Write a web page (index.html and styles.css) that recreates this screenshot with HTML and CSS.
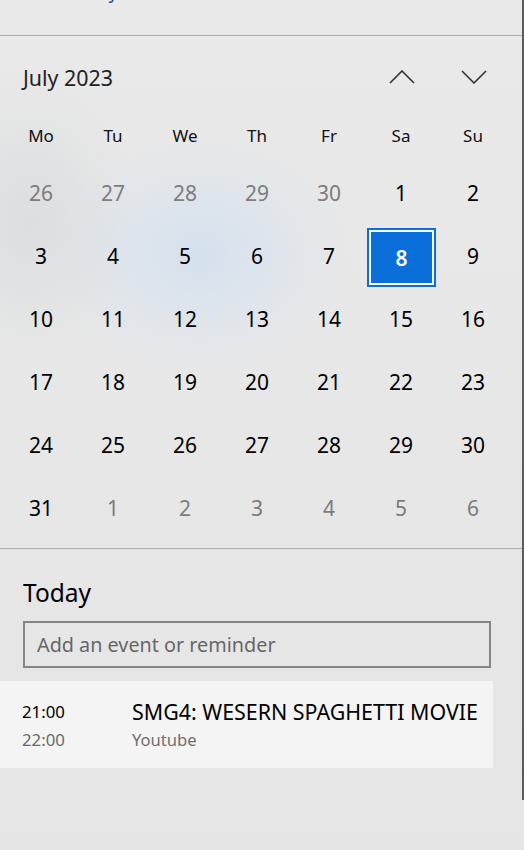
FILE: index.html
```html
<!DOCTYPE html>
<html lang="en">
<head>
    <meta charset="UTF-8">
    <meta name="viewport" content="width=device-width, initial-scale=1.0">
    <title>Calendar</title>
    <link rel="stylesheet" href="styles.css">
</head>
<body>
    <div class="panel">
        <div class="top-strip">
            <a class="date-link">Saturday</a>
        </div>

        <div class="calendar">
            <div class="month-row">
                <span class="month-title">July 2023</span>
                <div class="nav">
                    <button class="nav-btn" aria-label="Previous month">
                        <svg width="26" height="14" viewBox="0 0 26 14"><path d="M1 13 L13 1 L25 13" fill="none" stroke="#333" stroke-width="1.6"/></svg>
                    </button>
                    <button class="nav-btn" aria-label="Next month">
                        <svg width="26" height="14" viewBox="0 0 26 14"><path d="M1 1 L13 13 L25 1" fill="none" stroke="#333" stroke-width="1.6"/></svg>
                    </button>
                </div>
            </div>

            <div class="weekdays">
                <span>Mo</span><span>Tu</span><span>We</span><span>Th</span><span>Fr</span><span>Sa</span><span>Su</span>
            </div>

            <div class="days">
                <span class="other">26</span><span class="other">27</span><span class="other">28</span><span class="other">29</span><span class="other">30</span><span>1</span><span>2</span>
                <span>3</span><span>4</span><span>5</span><span>6</span><span>7</span><span class="selected">8</span><span>9</span>
                <span>10</span><span>11</span><span>12</span><span>13</span><span>14</span><span>15</span><span>16</span>
                <span>17</span><span>18</span><span>19</span><span>20</span><span>21</span><span>22</span><span>23</span>
                <span>24</span><span>25</span><span>26</span><span>27</span><span>28</span><span>29</span><span>30</span>
                <span>31</span><span class="other">1</span><span class="other">2</span><span class="other">3</span><span class="other">4</span><span class="other">5</span><span class="other">6</span>
            </div>
        </div>

        <div class="agenda">
            <h2 class="agenda-title">Today</h2>
            <input class="event-input" type="text" placeholder="Add an event or reminder">

            <div class="event">
                <div class="event-times">
                    <span class="start">21:00</span>
                    <span class="end">22:00</span>
                </div>
                <div class="event-info">
                    <span class="event-name">SMG4: WESERN SPAGHETTI MOVIE</span>
                    <span class="event-place">Youtube</span>
                </div>
            </div>
        </div>

        <div class="scrollbar"></div>
    </div>
</body>
</html>
```

FILE: styles.css
```css
* {
    box-sizing: border-box;
}
body {
    margin: 0;
    padding: 0;
    font-family: "Segoe UI", "Noto Sans", "Open Sans", sans-serif;
    color: #000;
    background: #e6e6e6;
}
.panel {
    position: relative;
    width: 524px;
    height: 850px;
    overflow: hidden;
    background:
        radial-gradient(ellipse 150px 120px at 200px 255px, rgba(210, 224, 240, 0.85), rgba(210, 224, 240, 0) 100%),
        radial-gradient(ellipse 110px 150px at 30px 220px, rgba(214, 217, 219, 0.7), rgba(214, 217, 219, 0) 100%),
        linear-gradient(#e9e9e9, #e5e5e5);
}

/* top strip with the clipped date link */
.top-strip {
    height: 36px;
    border-bottom: 1px solid #ababab;
    overflow: hidden;
    padding-left: 39px;
}
.date-link {
    display: block;
    margin-top: -21px;
    font-size: 19px;
    line-height: 24px;
    color: #1f4e9a;
}

/* calendar */
.month-row {
    display: flex;
    align-items: center;
    justify-content: space-between;
    height: 74px;
    padding: 8px 0 0 23px;
}
.month-title {
    font-size: 21.4px;
    color: #222;
}
.nav {
    display: flex;
    gap: 46px;
    padding-right: 37px;
}
.nav-btn {
    border: none;
    background: none;
    padding: 0;
    width: 26px;
    height: 14px;
    cursor: pointer;
}
.nav-btn svg {
    display: block;
}
.weekdays, .days {
    display: grid;
    grid-template-columns: repeat(7, 72px);
    padding-left: 5px;
}
.weekdays span {
    height: 51px;
    display: flex;
    align-items: center;
    justify-content: center;
    font-size: 17px;
    color: #111;
}
.days span {
    height: 63px;
    display: flex;
    align-items: center;
    justify-content: center;
    font-size: 21px;
}
.days .other {
    color: #7c7c7c;
}
.days .selected {
    margin: 4px 1px 0 2px;
    height: 59px;
    background: #0a6fd8;
    border: 2px solid #0a6fd8;
    box-shadow: inset 0 0 0 2px #fff;
    color: #fff;
    font-weight: 600;
}

/* agenda */
.agenda {
    margin-top: 9px;
    border-top: 1px solid #ababab;
}
.agenda-title {
    margin: 26px 0 0 23px;
    font-size: 24.5px;
    font-weight: normal;
    line-height: 36px;
}
.event-input {
    display: block;
    margin: 10px 0 0 23px;
    width: 468px;
    height: 47px;
    border: 2px solid #858585;
    background: transparent;
    padding: 0 12px;
    font-family: inherit;
    font-size: 19.8px;
}
.event-input::placeholder {
    color: #666;
}
.event {
    display: flex;
    margin-top: 13px;
    width: 493px;
    height: 87px;
    background: #f4f4f4;
    padding: 19px 0 0 22px;
}
.event-times {
    display: flex;
    flex-direction: column;
    width: 110px;
    font-size: 16.8px;
}
.event-times .start {
    line-height: 24px;
}
.event-times .end {
    line-height: 32px;
    color: #6a6a6a;
}
.event-info {
    display: flex;
    flex-direction: column;
}
.event-name {
    font-size: 21.4px;
    line-height: 24px;
}
.event-place {
    font-size: 16.6px;
    line-height: 32px;
    color: #6f6f6f;
}
.scrollbar {
    position: absolute;
    top: 0;
    right: 0;
    width: 2px;
    height: 800px;
    background: #5c5c5c;
}
```
